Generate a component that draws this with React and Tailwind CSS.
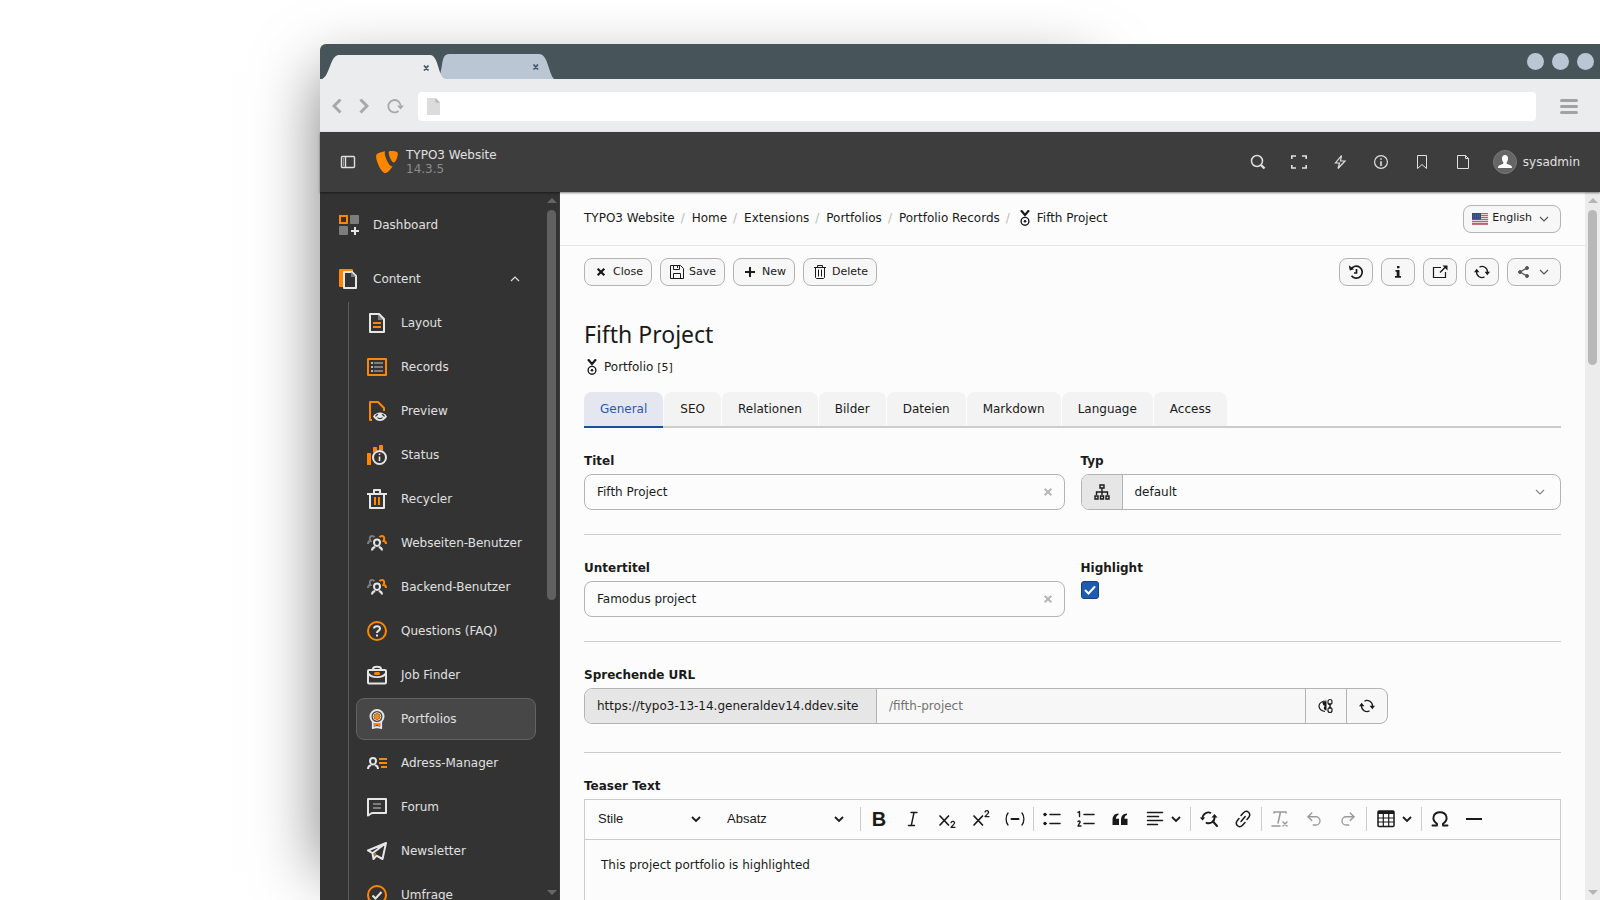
import { useState } from "react";
import { SiTypo3 } from "react-icons/si";
import { Undo2 } from "lucide-react";

const ORANGE = "#ff8700";
const LIGHT = "#e6e6e6";
const GREY = "#7d7d7d";

//// module menu icons, all on a 20x20 grid
const Icon20 = ({ children }) => (
  <svg viewBox="0 0 20 20" className="h-5 w-5 shrink-0" fill="none">
    {children}
  </svg>
);

const DashboardIcon = () => (
  <Icon20>
    <rect x="1" y="1" width="7" height="7" stroke={ORANGE} strokeWidth="2" />
    <rect x="11" width="9" height="9" rx="1" fill={GREY} />
    <rect y="11" width="9" height="9" rx="1" fill={GREY} />
    <path d="M16 12v8M12 16h8" stroke={LIGHT} strokeWidth="2" />
  </Icon20>
);

const ContentIcon = () => (
  <Icon20>
    <rect width="14" height="18" rx="1" fill={ORANGE} />
    <path d="M5 3h8l4 4v12H5z" fill="#333" stroke={LIGHT} strokeWidth="2" strokeLinejoin="round" />
    <path d="M12 3v5h5z" fill={GREY} />
  </Icon20>
);

const LayoutIcon = () => (
  <Icon20>
    <path d="M11 1v6h6z" fill={GREY} />
    <path d="M3 1h9l5 5v13H3z" stroke={LIGHT} strokeWidth="2" strokeLinejoin="round" />
    <path d="M6 10h8M6 14h8" stroke={ORANGE} strokeWidth="2" />
  </Icon20>
);

const RecordsIcon = () => (
  <Icon20>
    <rect x="1" y="2" width="18" height="16" stroke={ORANGE} strokeWidth="2" strokeLinejoin="round" />
    <path d="M7 6h9M7 10h9M7 14h9" stroke={GREY} strokeWidth="2" />
    <path d="M4 6h2M4 10h2M4 14h2" stroke={LIGHT} strokeWidth="1.5" />
  </Icon20>
);

const PreviewIcon = () => (
  <Icon20>
    <path d="M5 19H3V1h8l6 6v3" stroke={ORANGE} strokeWidth="2" strokeLinejoin="round" />
    <path d="M6 15.500c2-3 4.500-4 7-4s5 1 7 4c-2 3-4.500 4.500-7 4.500s-5-1.500-7-4.500z" fill={LIGHT} />
    <path d="M8.500 15.500c1-1.500 2-2 2.500-2.300M17.500 15.500c-1-1.500-2-2-2.500-2.300M10.500 16.500c1 1.500 4 1.500 5 0" stroke="#333" strokeWidth="1.300" />
  </Icon20>
);

const StatusIcon = () => (
  <Icon20>
    <rect y="8" width="4" height="12" rx="0.500" fill={ORANGE} />
    <rect x="6" y="2" width="4" height="8" rx="0.500" fill={ORANGE} />
    <rect x="12" width="4" height="8" rx="0.500" fill={ORANGE} />
    <circle cx="12.500" cy="12.500" r="7.500" fill="#333" />
    <circle cx="12.500" cy="12.500" r="6.500" stroke={LIGHT} strokeWidth="2" />
    <path d="M12.500 11.500v4.500M12.500 8.500v1.600" stroke={LIGHT} strokeWidth="1.600" />
  </Icon20>
);

const RecyclerIcon = () => (
  <Icon20>
    <path d="M0 5h20M7 4V1h6v3M3 5v14h14V5" stroke={LIGHT} strokeWidth="2" strokeLinejoin="round" />
    <path d="M8 8v8M12 8v8" stroke={ORANGE} strokeWidth="2" />
  </Icon20>
);

const UsersIcon = () => (
  <Icon20>
    <path d="M1 11c0-2 1-3 2.500-3C2 5 3 3 5 3c1.300 0 2 .500 2.500 1.200" stroke={GREY} strokeWidth="2" />
    <path d="M19 11c0-2-1-3-2.500-3C18 5 17 3 15 3c-1.300 0-2 .500-2.500 1.200" stroke={ORANGE} strokeWidth="2" />
    <path d="M10 6.500c2 0 3 1.300 3 3s-1.200 3.500-3 3.500-3-1.800-3-3.500 1-3 3-3zM5 17.500c0-2 1-3 3.200-3.500M15 17.500c0-2-1-3-3.200-3.500" stroke={LIGHT} strokeWidth="2" />
  </Icon20>
);

const FaqIcon = () => (
  <Icon20>
    <circle cx="10" cy="10" r="9" stroke={ORANGE} strokeWidth="2" />
    <path d="M7 7.500c.300-3 6-3 6 .200 0 2-3 2-3 4.300M10 13.500v2" stroke={LIGHT} strokeWidth="2" />
  </Icon20>
);

const JobIcon = () => (
  <Icon20>
    <path d="M6 4c0-3 8-3 8 0" stroke={LIGHT} strokeWidth="2" />
    <rect x="1" y="5" width="18" height="13.500" rx="1" stroke={LIGHT} strokeWidth="2" />
    <path d="M1 8c3 5.500 15 5.500 18 0" stroke={LIGHT} strokeWidth="1.800" />
    <rect x="7" y="7" width="6" height="3" rx="1.500" fill={ORANGE} />
  </Icon20>
);

const PortfolioIcon = () => (
  <Icon20>
    <circle cx="10" cy="7.500" r="6.500" stroke={LIGHT} strokeWidth="2" />
    <circle cx="10" cy="7.500" r="3.800" stroke={LIGHT} strokeWidth="1" />
    <circle cx="10" cy="7.500" r="2.800" fill={ORANGE} />
    <path d="M5.800 12.500V19l4.200-1 4.200 1v-6.500" stroke={LIGHT} strokeWidth="1.800" />
    <path d="M8 15v2M12 15v2M7.500 15h5" stroke={ORANGE} strokeWidth="1.800" />
  </Icon20>
);

const AddressIcon = () => (
  <Icon20>
    <path d="M6 5c2 0 3 1.300 3 3s-1.200 3.500-3 3.500S3 9.700 3 8s1-3 3-3zM1 16c0-2.500 1-3.500 3.200-4M11 16c0-2.500-1-3.500-3.200-4" stroke={LIGHT} strokeWidth="2" />
    <path d="M12 6h8M12 10h8M14 14h6" stroke={ORANGE} strokeWidth="2" />
  </Icon20>
);

const ForumIcon = () => (
  <Icon20>
    <path d="M1 2h18v14H5l-4 2.500z" stroke={LIGHT} strokeWidth="2" strokeLinejoin="round" />
    <path d="M6 7h8M6 11h8" stroke={GREY} strokeWidth="1.800" />
  </Icon20>
);

const NewsletterIcon = () => (
  <Icon20>
    <path d="M19 2L1 9.500l4.500 2.700zM19 2L5.500 12.200 6.500 18l3-3.300 6 3.300z" stroke={LIGHT} strokeWidth="2" strokeLinejoin="round" />
    <path d="M8 12v3" stroke={ORANGE} strokeWidth="1.500" />
  </Icon20>
);

const UmfrageIcon = () => (
  <Icon20>
    <circle cx="10" cy="10" r="9" stroke={ORANGE} strokeWidth="2" />
    <path d="M5.500 10.500l3 3 6-6.500" stroke={LIGHT} strokeWidth="2" />
  </Icon20>
);

//// small action icons, 16x16 grid
const Icon16 = ({ children, className = "" }) => (
  <svg viewBox="0 0 16 16" className={`h-4 w-4 shrink-0 ${className}`} fill="none" stroke="currentColor">
    {children}
  </svg>
);

const MedalIcon = () => (
  <Icon16>
    <path d="M4 .300l4 4.700 4-4.700" strokeWidth="2.200" />
    <circle cx="8" cy="11.300" r="3.900" strokeWidth="1.400" />
    <circle cx="8" cy="11.300" r="1.300" fill="currentColor" stroke="none" />
  </Icon16>
);

const CrossIcon = ({ className }) => (
  <Icon16 className={className}>
    <path d="M4.700 4.700l6.600 6.600M11.300 4.700l-6.600 6.600" strokeWidth="2.200" />
  </Icon16>
);

const SaveIcon = () => (
  <Icon16>
    <path d="M2 1.500h9.500l3 3v10H1.500v-13zM4.500 1.500v4h6v-4M4.500 14.500v-5h7v5M8.500 2v2" />
  </Icon16>
);

const PlusIcon = () => (
  <Icon16>
    <path d="M8 3v10M3 8h10" strokeWidth="2" />
  </Icon16>
);

const TrashIcon = () => (
  <Icon16>
    <path d="M2 3.500h12M5.500 3V1.500h5V3M3.500 3.500v10l1 1h7l1-1v-10M6.500 5.500v7M9.500 5.500v7" />
  </Icon16>
);

const HistoryIcon = () => (
  <Icon16>
    <path d="M3 5.200a6 6 0 1 1 .500 6.600M8.500 5v4h-2.500" strokeWidth="1.700" />
    <path d="M.800 1.200l1 5.300 4.300-1.200z" fill="currentColor" stroke="none" />
  </Icon16>
);

const InfoIcon = () => (
  <Icon16>
    <path d="M7 2h2.500v2.200H7zM5.500 6h4v6H11v1.800H5V12h1.700V7.800H5.500z" fill="currentColor" stroke="none" />
  </Icon16>
);

const ExternalIcon = () => (
  <Icon16>
    <path d="M9 3.500H1.500v10h12V8" strokeWidth="1.200" />
    <path d="M8 8.500l6-6" strokeWidth="1.500" />
    <path d="M10.500 1.500h5v5z" fill="currentColor" stroke="none" />
  </Icon16>
);

const RefreshIcon = () => (
  <Icon16>
    <path d="M5.500 3.100A5.500 5.500 0 0 1 13.500 8M10.500 12.900A5.500 5.500 0 0 1 2.500 8" strokeWidth="1.300" />
    <path d="M10.600 7.800h5.400l-2.700 3.400zM0 8.200h5.400L2.700 4.800z" fill="currentColor" stroke="none" />
  </Icon16>
);

const ShareIcon = () => (
  <Icon16 className="text-[#555]">
    <path d="M4 8l7-4M4 8l7 4" strokeWidth="1.300" />
    <circle cx="4" cy="8" r="1.500" fill="currentColor" />
    <circle cx="11" cy="4" r="1.500" fill="currentColor" />
    <circle cx="11" cy="12" r="1.500" fill="currentColor" />
  </Icon16>
);

const ChevronIcon = ({ up = false, className = "" }) => (
  <Icon16 className={className}>
    <path d={up ? "M4 10l4-4 4 4" : "M4 6l4 4 4-4"} strokeWidth="1.200" />
  </Icon16>
);

const CaretIcon = ({ className = "" }) => (
  <svg viewBox="0 0 10 10" className={`h-[10px] w-[10px] shrink-0 ${className}`} fill="none">
    <path d="M1 3l4 4 4-4" stroke="#1a1a1a" strokeWidth="1.800" />
  </svg>
);

const SitemapIcon = () => (
  <Icon16>
    <path d="M6 1h4v3H6zM1 12h3v3H1zM6.500 12h3v3h-3zM12 12h3v3h-3zM8 4v7M2.500 11V8h11v3" strokeWidth="1.400" />
  </Icon16>
);

const SlugToggleIcon = () => (
  <Icon16>
    <path d="M8.500 3C4 3 1 5 1 8s2.500 5 6 5.500" strokeWidth="1.200" />
    <path d="M4.500 4l4-.500v9C5.500 12 5 9.500 7 8 5 7.500 4.500 6 4.500 4z" fill="currentColor" stroke="none" />
    <rect x="10" y="1.500" width="4" height="5" rx="2" strokeWidth="1.200" />
    <rect x="10" y="9.500" width="4" height="5" rx="2" strokeWidth="1.200" />
    <path d="M12 5v6" strokeWidth="1.500" />
  </Icon16>
);

const UsFlag = () => (
  <svg viewBox="0 0 16 12" className="h-3 w-4 shrink-0">
    <rect width="16" height="12" fill="#e8d5d8" />
    <path d="M0 .500h16M0 2.500h16M0 4.500h16M0 6.500h16M0 8.500h16M0 10.500h16M0 11.700h16" stroke="#b8505c" strokeWidth="0.900" />
    <rect width="9" height="6.500" fill="#364c7c" />
    <path d="M1 2h7M1 4h7" stroke="#6d7da0" strokeWidth="0.600" strokeDasharray="1 1" />
  </svg>
);

//// rich text toolbar icons, 20x20 grid
const Rte = ({ children }) => (
  <svg viewBox="0 0 20 20" className="h-5 w-5 shrink-0" fill="none" stroke="currentColor" strokeWidth="1.500" strokeLinecap="round" strokeLinejoin="round">
    {children}
  </svg>
);

const modules = [
  { name: "Layout", icon: <LayoutIcon /> },
  { name: "Records", icon: <RecordsIcon /> },
  { name: "Preview", icon: <PreviewIcon /> },
  { name: "Status", icon: <StatusIcon /> },
  { name: "Recycler", icon: <RecyclerIcon /> },
  { name: "Webseiten-Benutzer", icon: <UsersIcon /> },
  { name: "Backend-Benutzer", icon: <UsersIcon /> },
  { name: "Questions (FAQ)", icon: <FaqIcon /> },
  { name: "Job Finder", icon: <JobIcon /> },
  { name: "Portfolios", icon: <PortfolioIcon /> },
  { name: "Adress-Manager", icon: <AddressIcon /> },
  { name: "Forum", icon: <ForumIcon /> },
  { name: "Newsletter", icon: <NewsletterIcon /> },
  { name: "Umfrage", icon: <UmfrageIcon /> },
];

const tabs = ["General", "SEO", "Relationen", "Bilder", "Dateien", "Markdown", "Language", "Access"];
const crumbs = ["TYPO3 Website", "Home", "Extensions", "Portfolios", "Portfolio Records"];

function BrowserChrome() {
  return (
    <div>
      <div className="flex h-[35px] items-end justify-between rounded-tl-md bg-[#475459] pr-[6px]">
        <svg viewBox="0 0 236 25" className="h-[25px] w-[236px]">
          <path d="M118 25C124 15 120 0 129 0H219C228 0 228 18 234 25z" fill="#bac6d3" />
          <path d="M2 25C10 22 10 1 19 1H110C119 1 118 25 126 25z" fill="#ebecee" />
          <path d="M104 11.500l4.500 5M108.500 11.500l-4.500 5M213.500 10.500l4.500 5M218 10.500l-4.500 5" stroke="#44546a" strokeWidth="1.800" />
        </svg>
        <div className="flex gap-2 self-center">
          <span className="h-[17px] w-[17px] rounded-full bg-[#bac6d3]"></span>
          <span className="h-[17px] w-[17px] rounded-full bg-[#bac6d3]"></span>
          <span className="h-[17px] w-[17px] rounded-full bg-[#bac6d3]"></span>
        </div>
      </div>
      <div className="flex h-[53px] items-center bg-[#ebecee] pt-[2px] pr-[22px] pl-3 text-[#a8a8a8]">
        <button aria-label="Back">
          <svg viewBox="0 0 10 16" className="h-4 w-[10px]" fill="none" stroke="currentColor" strokeWidth="3">
            <path d="M8.500 .500L2 7l6.500 6.500" />
          </svg>
        </button>
        <button aria-label="Forward" className="ml-[17px]">
          <svg viewBox="0 0 10 16" className="h-4 w-[10px]" fill="none" stroke="currentColor" strokeWidth="3">
            <path d="M1.500 .500L8 7l-6.500 6.500" />
          </svg>
        </button>
        <button aria-label="Reload" className="ml-[18px]">
          <svg viewBox="0 0 17 16" className="h-4 w-[17px]" fill="none" stroke="currentColor" strokeWidth="1.800">
            <path d="M11.500 12A6.200 6.200 0 1 1 13.700 6.500" />
            <path d="M10 6.500h7l-3.500 4z" fill="currentColor" stroke="none" />
          </svg>
        </button>
        <div className="ml-[14px] flex h-[29px] flex-1 items-center rounded bg-white pl-[9px]">
          <svg viewBox="0 0 13 17" className="h-[17px] w-[13px]">
            <path d="M0 0h8.500L13 4.500V17H0z" fill="#dcdcdc" />
            <path d="M8.500 0v4.500H13z" fill="#b8b8b8" />
          </svg>
          <input aria-label="Address" className="ml-2 min-w-0 flex-1 text-sm text-gray-700 outline-none" type="text" />
        </div>
        <button aria-label="Menu" className="ml-6 flex flex-col gap-[3px]">
          <span className="h-[3px] w-[18px] rounded-full bg-[#a2a2a2]"></span>
          <span className="h-[3px] w-[18px] rounded-full bg-[#a2a2a2]"></span>
          <span className="h-[3px] w-[18px] rounded-full bg-[#a2a2a2]"></span>
        </button>
      </div>
    </div>
  );
}

function TopBar() {
  return (
    <header className="relative z-10 flex h-[60px] shrink-0 items-center bg-[#3d3d3d] px-5 text-[#e0e0e0] shadow-[0_1px_2px_rgba(0,0,0,0.500)]">
      <button aria-label="Toggle menu">
        <Icon16>
          <rect x="1.500" y="2.500" width="13" height="11" rx="1" strokeWidth="1.400" />
          <path d="M5.500 3v10" strokeWidth="1.400" />
          <path d="M3.500 4.500v8" strokeDasharray="1 1" />
        </Icon16>
      </button>
      <SiTypo3 className="ml-5 h-[22px] w-[22px] text-[#ff8700]" />
      <div className="ml-2 text-xs leading-[14px]">
        <div>TYPO3 Website</div>
        <div className="text-[#8c8c8c]">14.3.5</div>
      </div>
      <div className="ml-auto flex items-center gap-[25px]">
        <button aria-label="Search">
          <Icon16>
            <circle cx="7" cy="7" r="5.500" strokeWidth="1.500" />
            <path d="M11 11l3.500 3.500" strokeWidth="2.400" />
          </Icon16>
        </button>
        <button aria-label="Fullscreen">
          <Icon16>
            <path d="M.800 5V2H5M11 2h4.200v3M.800 11v3H5M11 14h4.200v-3" strokeWidth="1.600" />
          </Icon16>
        </button>
        <button aria-label="Clear cache">
          <Icon16>
            <path d="M9.500 1.500L3.500 9h4l-1.500 5.500L13 7H8.500z" strokeWidth="1.200" />
          </Icon16>
        </button>
        <button aria-label="System information">
          <Icon16>
            <circle cx="8" cy="8" r="6.400" strokeWidth="1.200" />
            <path d="M8 7.200V12M8 4.200v1.600" strokeWidth="1.600" />
          </Icon16>
        </button>
        <button aria-label="Bookmarks">
          <Icon16>
            <path d="M3.500 1.500h9v13L8 10.500l-4.500 4z" />
          </Icon16>
        </button>
        <button aria-label="Documents">
          <Icon16>
            <path d="M2.500 1.500h8l3 3v10h-11zM10.500 1.500v3h3" />
          </Icon16>
        </button>
        <button className="-ml-[3px] flex items-center gap-[6px] text-xs">
          <span className="flex h-6 w-6 items-center justify-center overflow-hidden rounded-full border border-[#777] bg-[#666]">
            <svg viewBox="0 0 16 16" className="h-4 w-4" fill="#fff">
              <path d="M8 1c2 0 3 1.300 3 3.200 0 1.800-.500 3.200-1.300 4v1.600l3.800 1.400c.900.400 1.500 1.300 1.500 2.800H1c0-1.500.600-2.400 1.500-2.800l3.800-1.400V8.200C5.500 7.400 5 6 5 4.200 5 2.300 6 1 8 1z" />
            </svg>
          </span>
          sysadmin
        </button>
      </div>
    </header>
  );
}

function ScrollRail({ dark, thumb }) {
  const color = dark ? "#666" : "#b5b5b5";
  return (
    <div className={`flex w-[15px] shrink-0 flex-col items-center pt-[6px] pb-[5px] ${dark ? "bg-[#333]" : "bg-[#ececec]"}`}>
      <svg viewBox="0 0 10 5" className="h-[5px] w-[10px]">
        <path d="M5 0l5 5H0z" fill={color} />
      </svg>
      <div className="my-[7px] w-[9px] flex-1">
        <div className="rounded-full" style={{ height: thumb, backgroundColor: dark ? "#606060" : "#b8b8b8" }}></div>
      </div>
      <svg viewBox="0 0 10 5" className="h-[5px] w-[10px]">
        <path d="M0 0h10L5 5z" fill={color} />
      </svg>
    </div>
  );
}

function Sidebar() {
  const [open, setOpen] = useState(true);
  const [active, setActive] = useState("Portfolios");

  return (
    <aside className="flex w-60 shrink-0 overflow-hidden border-r border-[#3d3d3d] bg-[#333] text-xs text-[#e0e0e0]">
      <nav className="min-w-0 flex-1 px-2 pt-3">
        <button className="flex h-[42px] w-full items-center gap-[14px] px-[11px] text-left">
          <DashboardIcon />
          Dashboard
        </button>
        <button
          onClick={() => setOpen(!open)}
          className="mt-3 flex h-[42px] w-full items-center gap-[14px] pr-[13px] pl-[11px] text-left"
        >
          <ContentIcon />
          <span className="flex-1">Content</span>
          <ChevronIcon up={open} />
        </button>
        {open && (
          <ul className="mt-[2px] ml-5 flex flex-col gap-[2px] border-l border-[#5a5a5a] pl-[7px]">
            {modules.map((m) => (
              <li key={m.name}>
                <button
                  onClick={() => setActive(m.name)}
                  className={`flex h-[42px] w-full items-center gap-[14px] rounded-lg border px-[10px] text-left whitespace-nowrap ${
                    active === m.name ? "border-[#636363] bg-[#474747]" : "border-transparent"
                  }`}
                >
                  {m.icon}
                  {m.name}
                </button>
              </li>
            ))}
          </ul>
        )}
      </nav>
      <ScrollRail dark thumb="58%" />
    </aside>
  );
}

function DocButton({ children, className = "", ...rest }) {
  return (
    <button
      className={`flex h-7 items-center justify-center gap-1 rounded-lg border border-[#b3b3b3] bg-[#f7f7f7] text-[11px] ${className}`}
      {...rest}
    >
      {children}
    </button>
  );
}

function TextField({ id, label, value }) {
  const [text, setText] = useState(value);
  return (
    <div>
      <label htmlFor={id} className="mb-1 block font-bold leading-[18px]">
        {label}
      </label>
      <div className="flex h-9 items-center rounded-lg border border-[#b3b3b3] pr-2">
        <input
          id={id}
          type="text"
          value={text}
          onChange={(e) => setText(e.target.value)}
          className="h-full min-w-0 flex-1 pl-3 outline-none"
        />
        <button aria-label={`Clear ${label}`} onClick={() => setText("")} className="text-[#b8b8b8]">
          <CrossIcon />
        </button>
      </div>
    </div>
  );
}

function ToolButton({ label, disabled, wide, children }) {
  return (
    <button
      aria-label={label}
      disabled={disabled}
      className={`flex h-8 shrink-0 items-center justify-center ${wide ? "w-[50px] gap-[6px]" : "w-8"} ${
        disabled ? "text-[#999]" : ""
      }`}
    >
      {children}
    </button>
  );
}

const Divider = () => <span className="h-6 w-px shrink-0 bg-[#ccc]"></span>;

function EditorToolbar() {
  return (
    <div className="flex h-10 items-center gap-[2px] border-b border-[#ccc] pb-px pl-[3px] font-['Liberation_Sans',sans-serif] text-[13px]">
      <div className="mr-1 flex w-[123px] items-center">
        <select aria-label="Stile" className="h-8 flex-1 appearance-none pl-[10px] outline-none">
          <option>Stile</option>
        </select>
        <CaretIcon className="mr-[10px]" />
      </div>
      <div className="mr-1 flex w-[137px] items-center">
        <select aria-label="Absatz" className="h-8 flex-1 appearance-none pl-[10px] outline-none">
          <option>Absatz</option>
        </select>
        <CaretIcon className="mr-[10px]" />
      </div>
      <Divider />
      <ToolButton label="Fett">
        <b className="text-[20px]">B</b>
      </ToolButton>
      <ToolButton label="Kursiv">
        <Rte><path d="M8 3.500h6M5.500 16.500h6M11 3.500l-2.700 13" strokeWidth="1.400" /></Rte>
      </ToolButton>
      <ToolButton label="Tiefgestellt">
        <Rte>
          <path d="M3 7l8.500 9M11.500 7L3 16" strokeWidth="1.700" />
          <path d="M14 13.700c.700-2 3.800-1.500 3.500.300-.200 1.300-2 2.500-3.500 4.300h4" strokeWidth="1.300" />
        </Rte>
      </ToolButton>
      <ToolButton label="Hochgestellt">
        <Rte>
          <path d="M3 7l8.500 9M11.500 7L3 16" strokeWidth="1.700" />
          <path d="M14 3c.700-2 3.800-1.500 3.500.300-.200 1.300-2 2.500-3.500 4.300h4" strokeWidth="1.300" />
        </Rte>
      </ToolButton>
      <ToolButton label="Weiches Trennzeichen">
        <Rte><path d="M3 4C.500 7 .500 13 3 16M17 4c2.500 3 2.500 9 0 12" strokeWidth="1.300" /><path d="M6.500 10h7" strokeWidth="2" /></Rte>
      </ToolButton>
      <Divider />
      <ToolButton label="Aufzählung">
        <Rte>
          <path d="M8 5.500h10M8 14.500h10" />
          <circle cx="3" cy="5.500" r="1.300" fill="currentColor" strokeWidth="1" />
          <circle cx="3" cy="14.500" r="1.300" fill="currentColor" strokeWidth="1" />
        </Rte>
      </ToolButton>
      <ToolButton label="Nummerierung">
        <Rte>
          <path d="M8 5.500h10M8 14.500h10" />
          <path d="M2 3.300l1.500-.800v5M2 12.500c1-1 2.500-.300 2 .900L2 17h3" strokeWidth="1.400" />
        </Rte>
      </ToolButton>
      <ToolButton label="Blockzitat">
        <Rte>
          <path d="M2.500 16v-5C2.500 7 4.500 4.700 8.500 4.500v1.500C6.500 6.500 6 8 6 9.700h3V16zM11 16v-5c0-4 2-6.300 6-6.500v1.500c-2 .500-2.500 2-2.500 3.700h3V16z" fill="currentColor" stroke="none" />
        </Rte>
      </ToolButton>
      <ToolButton label="Ausrichtung" wide>
        <Rte><path d="M2.500 3.500h15M2.500 7.500h11M2.500 11.500h15M2.500 15.500h10" /></Rte>
        <CaretIcon />
      </ToolButton>
      <Divider />
      <ToolButton label="Suchen und ersetzen">
        <Rte>
          <path d="M3.500 9.500C3.500 5 8 2.500 11.500 3.800M15.500 8c.500 4-3.500 7.500-8 5.800" strokeWidth="1.800" />
          <path d="M14 12.500l4 4.500" strokeWidth="2" />
          <path d="M.800 8.500h5.400L3.500 11.500zM12.500 8.500h6L15.500 5z" fill="currentColor" stroke="none" />
        </Rte>
      </ToolButton>
      <ToolButton label="Link">
        <Rte>
          <path d="M8 6.500l2.500-2.700c3.500-3.500 8 .500 5.300 4.500L14 10.500M12 13.500l-2.500 2.700c-3.500 3.500-8-.500-5.300-4.500L6 9.500M8 12.500L12.200 7.500" />
        </Rte>
      </ToolButton>
      <Divider />
      <ToolButton label="Formatierung entfernen" disabled>
        <Rte><path d="M4 3h12M4 3v1M16 3v1M10.500 3L8 14M2 17h8M13 13l4 4M17 13l-4 4" /></Rte>
      </ToolButton>
      <ToolButton label="Rückgängig" disabled><Undo2 size={18} strokeWidth={1.8} /></ToolButton>
      <ToolButton label="Wiederherstellen" disabled><Undo2 size={18} strokeWidth={1.8} className="-scale-x-100" /></ToolButton>
      <Divider />
      <ToolButton label="Tabelle" wide>
        <Rte>
          <rect x="2" y="2" width="16" height="15.500" rx="1" />
          <path d="M2 3.500h16" strokeWidth="3" strokeLinecap="butt" />
          <path d="M2 9h16M2 13h16M7.300 4v13M12.700 4v13" strokeWidth="1.200" />
        </Rte>
        <CaretIcon />
      </ToolButton>
      <Divider />
      <ToolButton label="Sonderzeichen">
        <Rte><path d="M2.500 16.500H7v-1.800C1 11 3 3.300 10 3.300s9 7.700 3 11.400v1.800h4.500" strokeWidth="1.900" /></Rte>
      </ToolButton>
      <ToolButton label="Horizontale Linie">
        <Rte><path d="M2 10h16" strokeWidth="2" strokeLinecap="butt" /></Rte>
      </ToolButton>
    </div>
  );
}

function RecordForm() {
  const [highlight, setHighlight] = useState(true);

  return (
    <form onSubmit={(e) => e.preventDefault()}>
      <div className="grid grid-cols-2 gap-4 border-b border-[#ccc] py-6">
        <TextField id="title" label="Titel" value="Fifth Project" />
        <div>
          <label htmlFor="type" className="mb-1 block font-bold leading-[18px]">
            Typ
          </label>
          <div className="flex h-9 items-center overflow-hidden rounded-lg border border-[#b3b3b3] pr-3">
            <span className="flex h-full w-[41px] items-center justify-center border-r border-[#b3b3b3] bg-[#e6e6e6]">
              <SitemapIcon />
            </span>
            <select id="type" className="h-full flex-1 appearance-none pl-3 outline-none">
              <option>default</option>
            </select>
            <ChevronIcon className="text-[#888]" />
          </div>
        </div>
      </div>

      <div className="grid grid-cols-2 gap-4 border-b border-[#ccc] py-6">
        <TextField id="subtitle" label="Untertitel" value="Famodus project" />
        <div>
          <label htmlFor="highlight" className="mb-1 block font-bold leading-[18px]">
            Highlight
          </label>
          <div className="grid h-[18px] w-[18px]">
            <input
              id="highlight"
              type="checkbox"
              checked={highlight}
              onChange={(e) => setHighlight(e.target.checked)}
              className="col-start-1 row-start-1 h-[18px] w-[18px] appearance-none rounded-[3px] border border-[#163f7d] checked:bg-[#1f5bb0]"
            />
            {highlight && (
              <svg viewBox="0 0 18 18" className="pointer-events-none col-start-1 row-start-1 h-[18px] w-[18px]" fill="none">
                <path d="M4.500 9.500l3 3L13.500 6" stroke="#fff" strokeWidth="2" strokeLinecap="round" />
              </svg>
            )}
          </div>
        </div>
      </div>

      <div className="border-b border-[#ccc] pt-6 pb-7">
        <label htmlFor="slug" className="mb-1 block font-bold leading-[18px]">
          Sprechende URL
        </label>
        <div className="flex h-9 max-w-[804px] overflow-hidden rounded-lg border border-[#b3b3b3] bg-[#f7f7f7]">
          <span className="flex w-[292px] items-center border-r border-[#b3b3b3] bg-[#e6e6e6] pl-3">
            https://typo3-13-14.generaldev14.ddev.site
          </span>
          <input id="slug" type="text" readOnly value="/fifth-project" className="min-w-0 flex-1 px-3 text-[#737373] outline-none" />
          <button aria-label="Toggle slug" className="flex w-[41px] items-center justify-center border-l border-[#b3b3b3]">
            <SlugToggleIcon />
          </button>
          <button aria-label="Recreate slug" className="flex w-[41px] items-center justify-center border-l border-[#b3b3b3]">
            <RefreshIcon />
          </button>
        </div>
      </div>

      <div className="pt-6">
        <label htmlFor="teaser" className="mb-1 block font-bold leading-[18px]">
          Teaser Text
        </label>
        <div className="border border-[#ccc]">
          <EditorToolbar />
          <textarea
            id="teaser"
            defaultValue="This project portfolio is highlighted"
            className="block h-40 w-full resize-none px-4 py-4 leading-[18px] outline-none"
          />
        </div>
      </div>
    </form>
  );
}

function Module() {
  const [tab, setTab] = useState("General");

  return (
    <main className="flex min-w-0 flex-1 overflow-hidden bg-[#fcfcfc] text-xs text-[#1a1a1a]">
      <div className="min-w-0 flex-1">
        <div className="flex h-[54px] items-center justify-between border-b border-[#e6e6e6] px-6">
          <nav className="flex items-center gap-[6px] pb-[2px]">
            {crumbs.map((c) => (
              <span key={c} className="flex items-center gap-[6px]">
                <a href="#">{c}</a>
                <span className="w-[5px] text-[#bbb]">/</span>
              </span>
            ))}
            <a href="#" className="flex items-center gap-1">
              <MedalIcon />
              Fifth Project
            </a>
          </nav>
          <DocButton className="px-2">
            <UsFlag />
            English
            <ChevronIcon className="text-[#555]" />
          </DocButton>
        </div>

        <div className="px-6 pt-3">
          <div className="flex justify-between">
            <div className="flex gap-2">
              <DocButton className="px-2"><CrossIcon />Close</DocButton>
              <DocButton className="px-2"><SaveIcon />Save</DocButton>
              <DocButton className="px-2"><PlusIcon />New</DocButton>
              <DocButton className="px-2"><TrashIcon />Delete</DocButton>
            </div>
            <div className="flex gap-2">
              <DocButton aria-label="History" className="w-[34px]"><HistoryIcon /></DocButton>
              <DocButton aria-label="Information" className="w-[34px]"><InfoIcon /></DocButton>
              <DocButton aria-label="Open in new window" className="w-[34px]"><ExternalIcon /></DocButton>
              <DocButton aria-label="Reload" className="w-[34px]"><RefreshIcon /></DocButton>
              <DocButton aria-label="Share" className="w-[54px]"><ShareIcon /><ChevronIcon className="text-[#555]" /></DocButton>
            </div>
          </div>

          <h1 className="mt-8 font-['Noto_Sans',sans-serif] text-[23px] leading-8">Fifth Project</h1>
          <div className="mt-[7px] flex h-5 items-center gap-1">
            <MedalIcon />
            <span>
              Portfolio <span className="text-[11px]">[5]</span>
            </span>
          </div>

          <div role="tablist" className="mt-[15px] flex gap-px border-b-2 border-[#ccc]">
            {tabs.map((t) => (
              <button
                key={t}
                role="tab"
                aria-selected={tab === t}
                onClick={() => setTab(t)}
                className={`-mb-[2px] h-9 rounded-t-lg border-b-2 px-4 ${
                  tab === t ? "border-[#1b4f99] bg-[#e4e7f0] text-[#1f5bb0]" : "border-[#ccc] bg-[#f3f3f3]"
                }`}
              >
                {t}
              </button>
            ))}
          </div>

          <RecordForm />
        </div>
      </div>
      <ScrollRail thumb="23%" />
    </main>
  );
}

export default function App() {
  return (
    <div className="flex h-screen overflow-hidden bg-white pt-11 pl-80 font-['DejaVu_Sans',sans-serif]">
      <div className="relative flex min-w-0 flex-1 flex-col">
        {/* soft shadow behind the left side of the window */}
        <div className="absolute inset-y-7 left-0 w-3/5 shadow-[0_0_60px_rgba(0,0,0,0.500)]"></div>
        <div className="relative flex min-h-0 flex-1 flex-col">
          <BrowserChrome />
          <TopBar />
          <div className="flex min-h-0 flex-1">
            <Sidebar />
            <Module />
          </div>
        </div>
      </div>
    </div>
  );
}
